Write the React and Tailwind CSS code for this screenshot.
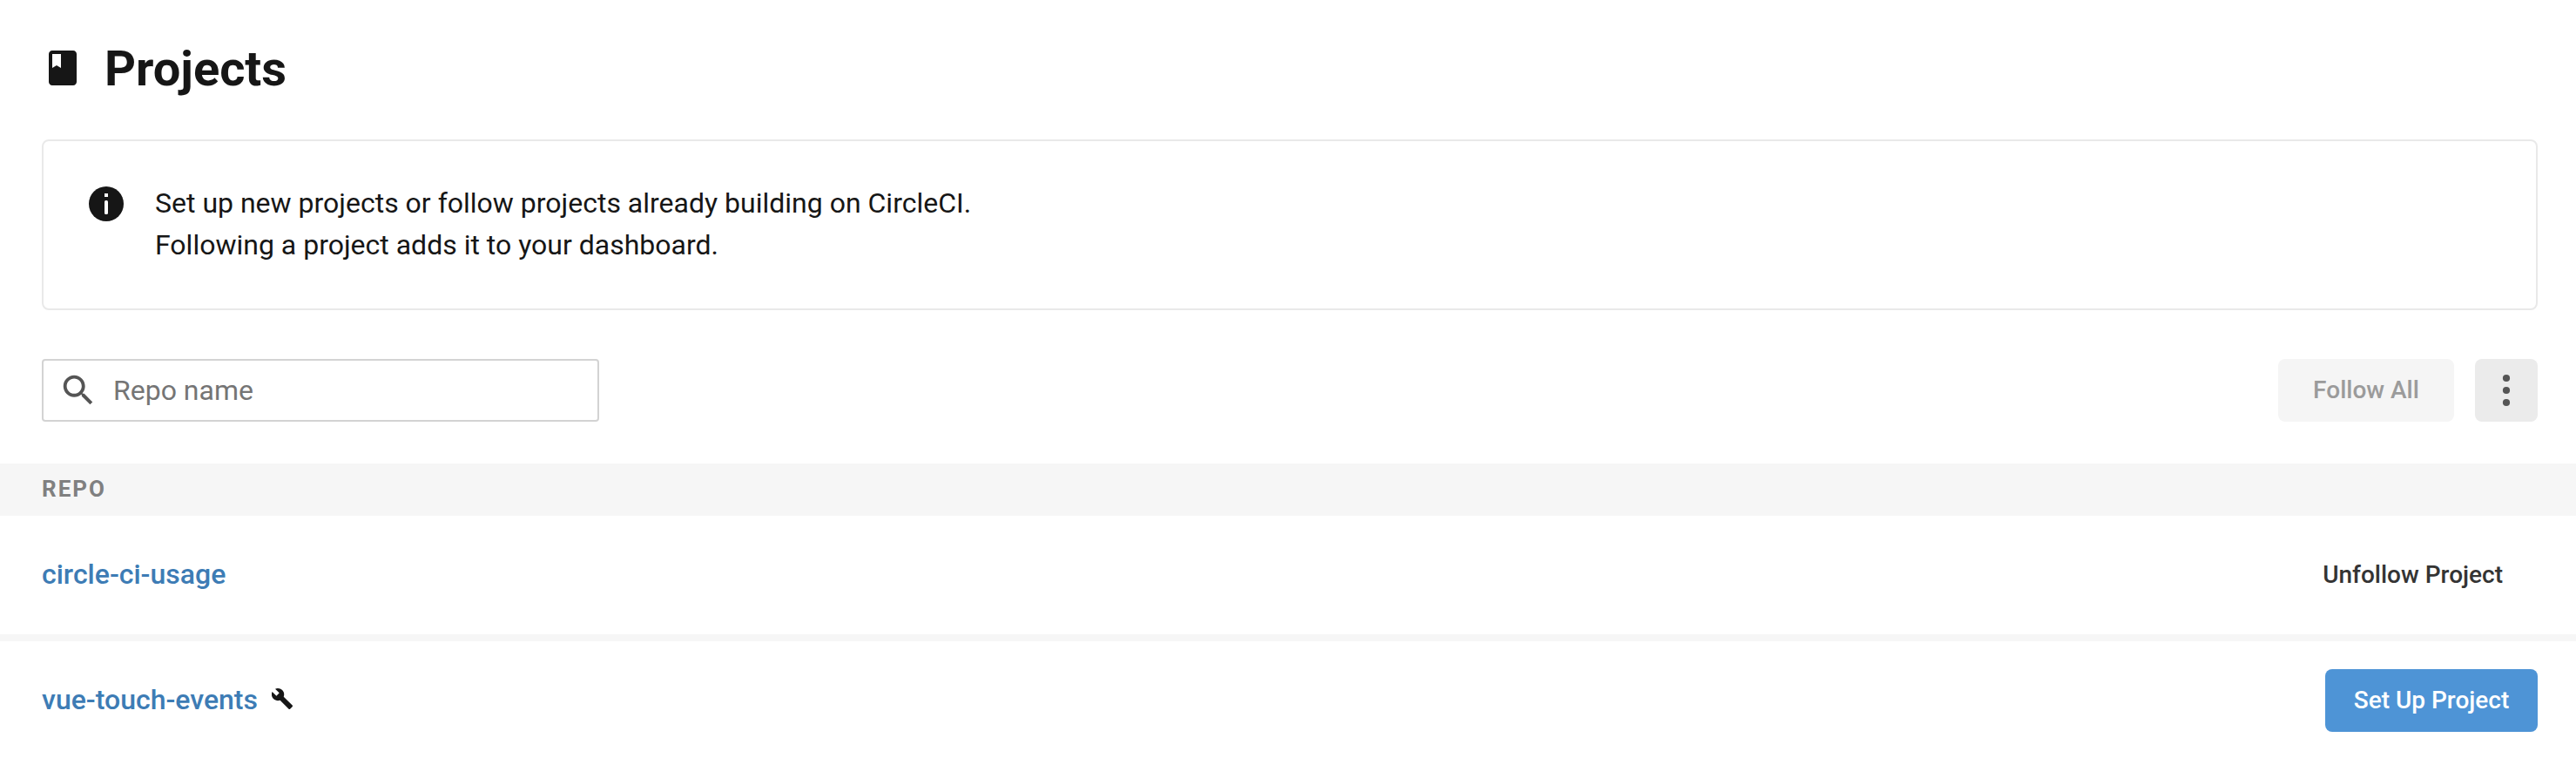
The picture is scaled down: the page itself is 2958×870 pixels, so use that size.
const BookIcon = () => (
  <svg viewBox="0 0 24 24" className="size-12 fill-[#161616]">
    <path d="M18 2H6c-1.1 0-2 .9-2 2v16c0 1.1.9 2 2 2h12c1.1 0 2-.9 2-2V4c0-1.1-.9-2-2-2zM6 4h5v8l-2.5-1.5L6 12V4z" />
  </svg>
);

const InfoIcon = () => (
  <svg viewBox="0 0 24 24" className="size-12 shrink-0">
    <circle cx="12" cy="12" r="10" fill="#161616" />
    <rect x="11" y="6" width="2" height="2" fill="#fff" />
    <rect x="11" y="10" width="2" height="8" rx="0.8" fill="#fff" />
  </svg>
);

const SearchIcon = () => (
  <svg viewBox="0 0 24 24" className="size-[46px] fill-[#555555]">
    <path d="M15.5 14h-.79l-.28-.27C15.41 12.59 16 11.11 16 9.5 16 5.91 13.09 3 9.5 3S3 5.91 3 9.5 5.91 16 9.5 16c1.61 0 3.09-.59 4.23-1.57l.27.28v.79l5 4.99L20.49 19l-4.99-5zm-6 0C7.01 14 5 11.99 5 9.5S7.01 5 9.5 5 14 7.01 14 9.5 11.99 14 9.5 14z" />
  </svg>
);

const MoreIcon = () => (
  <svg viewBox="0 0 48 48" className="size-12 fill-[#555555]">
    <circle cx="24" cy="10" r="4.1" />
    <circle cx="24" cy="24" r="4.1" />
    <circle cx="24" cy="38" r="4.1" />
  </svg>
);

const WrenchIcon = () => (
  <svg viewBox="1.05 1.1 21.9 21.9" className="mb-0.5 size-6 fill-[#161616]">
    <path d="M22.7 19l-9.1-9.1c.9-2.3.4-5-1.5-6.9-2-2-5-2.4-7.4-1.3L9 6 6 9 1.6 4.7C.4 7.1.9 10.1 2.9 12.1c1.9 1.9 4.6 2.4 6.9 1.5l9.1 9.1c.4.4 1 .4 1.4 0l2.3-2.3c.5-.4.5-1.1.1-1.4z" />
  </svg>
);

const Row = ({ name, icon, children }) => (
  <div className="flex h-[136px] items-center justify-between pr-11 pl-12">
    <div className="flex items-center gap-4 pb-0.5">
      <a className="text-[32px] leading-[48px] font-medium text-[#3d7cb5]">{name}</a>
      {icon}
    </div>
    {children}
  </div>
);

export default function App() {
  return (
    <main className="h-[870px] w-full overflow-hidden bg-white font-['Roboto',sans-serif] text-[#161616]">
      <header className="flex h-40 items-center gap-6 pb-1 pl-12">
        <BookIcon />
        <h1 className="pt-0.5 text-[56px] leading-[64px] font-bold">Projects</h1>
      </header>

      <section className="mr-11 ml-12 flex h-[196px] gap-8 rounded-lg border-2 border-[#e9e9e9] p-12">
        <InfoIcon />
        <p className="-mt-px text-[32px] leading-[48px]">
          Set up new projects or follow projects already building on CircleCI.
          <br />
          Following a project adds it to your dashboard.
        </p>
      </section>

      <div className="mt-14 mr-11 ml-12 flex h-[72px] justify-between">
        <label className="flex w-[640px] items-center gap-[17px] rounded border-2 border-[#d3d3d3] pl-[17px]">
          <SearchIcon />
          <span className="text-[32px] leading-[48px] text-[#757575]">Repo name</span>
        </label>
        <div className="flex gap-6">
          <button className="w-[202px] rounded-lg bg-[#f5f5f5] text-[28px] font-medium text-[#9b9b9b]">Follow All</button>
          <button className="flex w-[72px] items-center justify-center rounded-lg bg-[#ebebeb]">
            <MoreIcon />
          </button>
        </div>
      </div>

      <div className="mt-12 flex h-[60px] items-center bg-[#f6f6f6] pb-0.5 pl-12 text-[26px] font-bold tracking-[2px] text-[#808080]">
        REPO
      </div>
      <Row name="circle-ci-usage">
        <button className="h-[72px] px-10 text-[28px] font-medium text-[#343434]">Unfollow Project</button>
      </Row>
      <div className="h-2 bg-[#f6f6f6]" />
      <Row name="vue-touch-events" icon={<WrenchIcon />}>
        <button className="h-[72px] w-[244px] rounded-lg bg-[#4e94d6] text-[28px] font-medium text-white">Set Up Project</button>
      </Row>
    </main>
  );
}
